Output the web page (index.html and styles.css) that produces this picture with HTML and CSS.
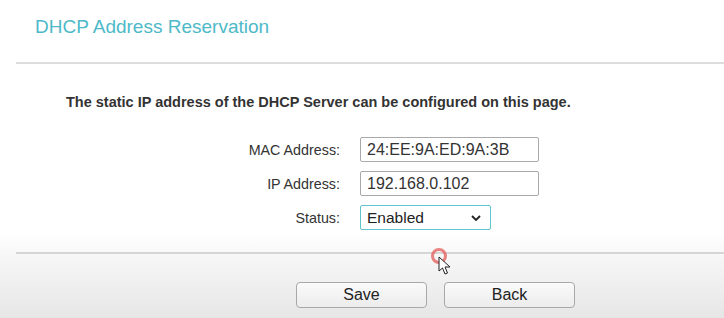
FILE: index.html
```html
<!DOCTYPE html>
<html lang="en">
<head>
  <meta charset="UTF-8" />
  <title>DHCP Address Reservation</title>
  <link rel="stylesheet" href="styles.css">
</head>
<body>

  <div class="page-head">
    <h1>DHCP Address Reservation</h1>
  </div>
  <div class="divider"></div>

  <p class="intro">The static IP address of the DHCP Server can be configured on this page.</p>

  <form class="res-form">
    <label for="mac">MAC Address:</label>
    <input type="text" id="mac" value="24:EE:9A:ED:9A:3B" />
    <label for="ip">IP Address:</label>
    <input type="text" id="ip" value="192.168.0.102" />
    <label for="status">Status:</label>
    <div class="select-box">
      <span>Enabled</span>
      <svg width="12" height="8" viewBox="0 0 12 8"><path d="M2 2 L6 6 L10 2" fill="none" stroke="#222" stroke-width="1.8"/></svg>
    </div>
  </form>

  <div class="footer">
    <div class="divider"></div>
    <div class="buttons">
      <button type="button">Save</button>
      <button type="button">Back</button>
    </div>
    <!-- puntero del video -->
    <div class="cursor">
      <span class="click-ring"></span>
      <svg width="14" height="20" viewBox="0 0 14 20"><path d="M1 1 L1 15 L4.5 12 L7 18 L9.5 17 L7 11 L12 11 Z" fill="#fff" stroke="#222" stroke-width="1"/></svg>
    </div>
  </div>

</body>
</html>
```

FILE: styles.css
```css
/* Reset */
* {
  box-sizing: border-box;
  margin: 0; padding: 0;
}

body {
  font-family: "Liberation Sans", Arial, sans-serif;
  background: #fff;
  color: #333;
  width: 724px;
  height: 318px;
  overflow: hidden;
  display: flex;
  flex-direction: column;
}

/* Cabecera */
.page-head {
  height: 62px;
  padding: 16px 0 0 35px;
}

.page-head h1 {
  font-size: 19px;
  font-weight: normal;
  color: #4db9c9;
  line-height: 22px;
}

.divider {
  margin-left: 16px;
  border-top: 2px solid #dcdcdc;
}

/* Texto */
.intro {
  margin: 30px 0 0 66px;
  font-size: 14.5px;
  font-weight: bold;
  line-height: 16px;
  color: #333;
}

/* Formulario */
.res-form {
  display: grid;
  grid-template-columns: 340px 179px;
  column-gap: 20px;
  row-gap: 9px;
  align-items: center;
  margin-top: 27px;
}

.res-form label {
  text-align: right;
  font-size: 14.3px;
  color: #333;
}

.res-form input {
  height: 25px;
  border: 1px solid #a9a9a9;
  border-radius: 2px;
  padding: 0 6px;
  font-family: inherit;
  font-size: 16px;
  color: #333;
}

.select-box {
  width: 131px;
  height: 25px;
  border: 1px solid #5fc4cb;
  border-radius: 2px;
  padding: 0 8px 0 6px;
  display: flex;
  align-items: center;
  justify-content: space-between;
  font-size: 15.5px;
  color: #222;
}

/* Pie */
.footer {
  flex-grow: 1;
  margin-top: 3px;
  padding-top: 19px;
  background: linear-gradient(#fff, #f6f6f6 30%, #e6e6e6);
  position: relative;
}

.footer .divider {
  border-top-color: #d6d6d6;
}

.buttons {
  display: flex;
  gap: 17px;
  padding: 28px 0 0 296px;
}

.buttons button {
  width: 131px;
  height: 26px;
  border: 1px solid #a8a8a8;
  border-radius: 4px;
  background: linear-gradient(#fafafa, #ececec);
  font-family: inherit;
  font-size: 16px;
  color: #222;
}

.cursor {
  position: absolute;
  left: 431px;
  top: 15px;
}

.click-ring {
  position: absolute;
  left: 0;
  top: 0;
  width: 16px;
  height: 16px;
  border: 3px solid rgba(230, 90, 90, 0.75);
  border-radius: 50%;
}

.cursor svg {
  position: absolute;
  left: 7px;
  top: 8px;
}
```
